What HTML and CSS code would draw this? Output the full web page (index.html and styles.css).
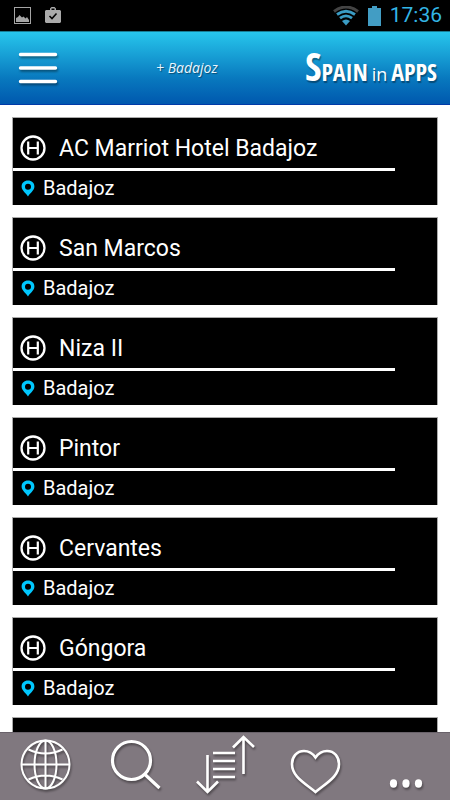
FILE: index.html
```html
<!DOCTYPE html>
<html lang="es">
<head>
<meta charset="utf-8">
<meta name="viewport" content="width=device-width, initial-scale=1">
<title>Spain in Apps</title>
<link rel="stylesheet" href="styles.css">
</head>
<body>
<svg class="defs" aria-hidden="true">
  <symbol id="hotel" viewBox="0 0 26 26">
    <circle cx="13" cy="13" r="11.500" fill="none" stroke="#fff" stroke-width="2.300"/>
    <path d="M8.200 6.500v13M17.800 6.500v13M8.200 13h9.600" fill="none" stroke="#fff" stroke-width="2.200"/>
  </symbol>
  <symbol id="pin" viewBox="0 0 14 18">
    <path fill="#00c8ff" fill-rule="evenodd" d="M7 1.500C3.200 1.500.6 4 .6 7.500c0 4 3.900 6 6.400 10 2.500-4 6.400-6 6.400-10 0-3.500-2.600-6-6.400-6zm0 3.200a3 3 0 1 1 0 6 3 3 0 0 1 0-6z"/>
  </symbol>
</svg>
<div class="status">
  <div class="status-group">
    <svg width="17" height="17" viewBox="0 0 17 17">
      <rect x=".5" y=".5" width="16" height="16" fill="none" stroke="#a5a5a5"/>
      <path fill="#a5a5a5" d="M2 15v-4l2-1 1.500-2L8 10.500 9.500 9.500l2 2L13 10l2 3v2z"/>
    </svg>
    <svg width="16" height="17" viewBox="0 0 16 17">
      <path fill="#aaa" fill-rule="evenodd" d="M5 3V1.500L6.500 0h3L11 1.500V3h4l1 1v11l-1 1H1l-1-1V4l1-1zm1.500 0h3V1.500h-3z"/>
      <path d="M4.500 9l2.500 2.500 4.500-5" fill="none" stroke="#000" stroke-width="1.600"/>
    </svg>
  </div>
  <div class="status-group status-right">
    <svg class="wifi" width="26" height="20" viewBox="0 0 26 20">
      <path d="M1 5.500Q13-3.500 25 5.500" fill="none" stroke="#444" stroke-width="3"/>
      <path d="M4 8.500Q13 2 22 8.500M7 12.200Q13 7.500 19 12.200" fill="none" stroke="#3a9cc4" stroke-width="2.800"/>
      <path d="M9 15q4-3 8 0l-4 4.500z" fill="#3a9cc4"/>
    </svg>
    <svg class="battery" width="13" height="20" viewBox="0 0 13 20">
      <path fill="#429dc4" d="M4 0h5v2h4v18H0V2h4z"/>
    </svg>
    <time class="clock">17:36</time>
  </div>
</div>
<header class="header">
  <button class="menu" aria-label="Menú">
    <svg width="40" height="34" viewBox="0 0 40 34">
      <path d="M2.500 3.500h35M2.500 17h35M2.500 30.500h35" fill="none" stroke="#fff" stroke-width="3.400" stroke-linecap="round"/>
    </svg>
  </button>
  <a class="place" href="#">+ Badajoz</a>
  <div class="logo"><span class="logo-initial">S</span><span class="logo-word">PAIN</span><span class="logo-in">in</span><span class="logo-word">APPS</span></div>
</header>
<main class="list">
  <article class="card"><h2 class="name"><svg class="hotel"><use href="#hotel"/></svg>AC Marriot Hotel Badajoz</h2><p class="city"><svg class="pin"><use href="#pin"/></svg>Badajoz</p></article>
  <article class="card"><h2 class="name"><svg class="hotel"><use href="#hotel"/></svg>San Marcos</h2><p class="city"><svg class="pin"><use href="#pin"/></svg>Badajoz</p></article>
  <article class="card"><h2 class="name"><svg class="hotel"><use href="#hotel"/></svg>Niza II</h2><p class="city"><svg class="pin"><use href="#pin"/></svg>Badajoz</p></article>
  <article class="card"><h2 class="name"><svg class="hotel"><use href="#hotel"/></svg>Pintor</h2><p class="city"><svg class="pin"><use href="#pin"/></svg>Badajoz</p></article>
  <article class="card"><h2 class="name"><svg class="hotel"><use href="#hotel"/></svg>Cervantes</h2><p class="city"><svg class="pin"><use href="#pin"/></svg>Badajoz</p></article>
  <article class="card"><h2 class="name"><svg class="hotel"><use href="#hotel"/></svg>Góngora</h2><p class="city"><svg class="pin"><use href="#pin"/></svg>Badajoz</p></article>
  <article class="card card-empty"></article>
</main>
<nav class="tabs">
  <button class="tab" aria-label="Web"><svg viewBox="0 0 64 68"><g stroke-width="2">
    <circle cx="32.500" cy="32.500" r="24"/><ellipse cx="32.500" cy="32.500" rx="11" ry="24"/>
    <path d="M32.500 8.500v48M8.500 32.500h48M15.500 17.500q17 8 34 0M15.500 47.500q17-8 34 0"/></g></svg></button>
  <button class="tab" aria-label="Buscar"><svg viewBox="0 0 64 68"><g stroke-width="3.200">
    <circle cx="28.500" cy="28.500" r="19"/><path d="M42 42.500l14.500 13.500"/></g></svg></button>
  <button class="tab" aria-label="Ordenar"><svg viewBox="0 0 64 68"><g stroke-width="2.600">
    <path d="M14.500 23v37M4 49.500L14.500 60 25 49.500M20 21h22M20 29h22M20 37h22M20 45h22M50.500 42V5M40 15.500L50.500 5 61 15"/></g></svg></button>
  <button class="tab" aria-label="Favoritos"><svg viewBox="0 0 64 68"><g stroke-width="2.600">
    <path d="M32.500 25.500C29 20.500 25.500 19 21 19 13.500 19 9 25 9 32c0 12 11 18 23.500 28C45 50 56 44 56 32c0-7-4.500-13-12-13-4.500 0-8 1.500-11.500 6.500z"/></g></svg></button>
  <button class="tab" aria-label="Más"><svg viewBox="0 0 64 68"><g fill="#fff" stroke="none">
    <ellipse cx="20.500" cy="51.500" rx="3.600" ry="4.200"/><ellipse cx="33" cy="51.500" rx="3.600" ry="4.200"/><ellipse cx="45.500" cy="51.500" rx="3.600" ry="4.200"/></g></svg></button>
</nav>
</body>
</html>
```
FILE: styles.css
```css
* {
  box-sizing: border-box;
}

body {
  margin: 0;
  height: 100vh;
  display: flex;
  flex-direction: column;
  overflow: hidden;
  background: #fff;
  color: #fff;
  font-family: Roboto, "Noto Sans", sans-serif;
}

svg {
  display: block;
  flex: none;
}

button {
  margin: 0;
  padding: 0;
  border: 0;
  background: none;
}

.defs {
  position: absolute;
  width: 0;
  height: 0;
}

.status {
  flex: none;
  height: 31px;
  padding: 0 8px 0 14px;
  display: flex;
  align-items: center;
  justify-content: space-between;
  background: #000;
}

.status-group {
  display: flex;
  align-items: center;
  gap: 14px;
}

.status-right {
  gap: 9px;
}

.clock {
  color: #33b5e5;
  font-size: 21px;
  line-height: 31px;
}

.header {
  flex: none;
  height: 74px;
  padding: 0 13px 0 18px;
  display: grid;
  grid-template-columns: 138px auto 1fr;
  align-items: center;
  border-top: 1px solid #187c94;
  border-bottom: 1px solid #003aa8;
  background: linear-gradient(#27c6ec, #0878be 65%, #0058ae);
}

.menu {
  width: 40px;
}

.menu svg,
.tab svg {
  filter: drop-shadow(1px 2px 1px rgba(0, 0, 0, 0.4));
}

.place {
  padding-bottom: 2px;
  color: #e8f6ff;
  font-family: "Open Sans", sans-serif;
  font-size: 14px;
  font-style: italic;
  text-decoration: none;
  text-shadow: 1px 1px 1px rgba(0, 0, 0, 0.4);
}

.logo {
  justify-self: end;
  padding-top: 4px;
  display: flex;
  align-items: baseline;
  font-family: "Liberation Sans Narrow", "Open Sans Condensed", "Liberation Sans", sans-serif;
  font-weight: bold;
  line-height: 40px;
  white-space: nowrap;
  text-shadow: 1px 2px 1px rgba(0, 0, 0, 0.35);
}

.logo-initial {
  font-size: 40px;
}

.logo-word {
  font-size: 24px;
}

.logo-in {
  margin: 0 4px;
  font-family: "Open Sans", sans-serif;
  font-size: 18px;
  font-weight: normal;
}

.list {
  flex: 1;
  min-height: 0;
  padding: 12px 12px 0;
  display: flex;
  flex-direction: column;
  gap: 12px;
  overflow: hidden;
}

.card {
  flex: none;
  border: 1px solid #aaa;
  border-bottom: 0;
  background: #000;
}

.card-empty {
  height: 88px;
}

.name,
.city {
  margin: 0;
  display: flex;
  align-items: center;
  font-weight: normal;
}

.name {
  width: 90%;
  padding: 12px 0 0 7px;
  gap: 13px;
  border-bottom: 3px solid #fff;
  font-size: 23px;
  line-height: 38px;
}

.city {
  padding-left: 8px;
  gap: 8px;
  font-size: 20px;
  line-height: 34px;
}

.hotel {
  width: 26px;
  height: 26px;
  margin-bottom: 2px;
}

.pin {
  width: 14px;
  height: 18px;
}

.tabs {
  flex: none;
  height: 68px;
  display: grid;
  grid-template-columns: repeat(5, 1fr);
  background: #80787f;
  box-shadow: inset 0 1px #69626a;
}

.tab {
  display: flex;
  justify-content: center;
}

.tab svg {
  width: 64px;
  height: 68px;
  fill: none;
  stroke: #fff;
}
```
